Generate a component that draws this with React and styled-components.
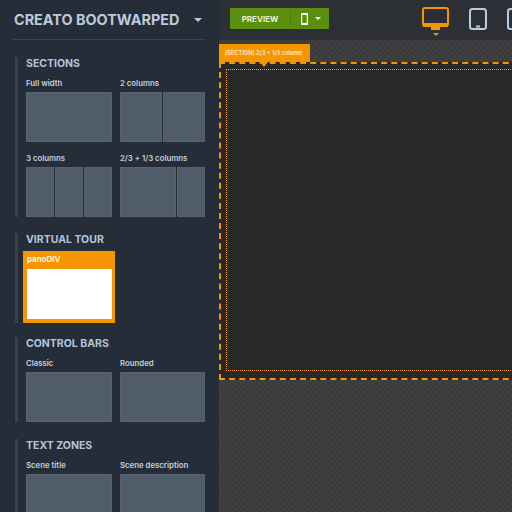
import React from "react";
import styled, { createGlobalStyle } from "styled-components";

const GlobalStyle = createGlobalStyle`
  html, body {
    margin: 0;
    padding: 0;
    height: 100%;
    overflow: hidden;
    background: #2c2f34;
    font-family: "Inter", "Liberation Sans", sans-serif;
  }
`;

const Page = styled.div`
  display: flex;
  width: 512px;
  height: 512px;
  overflow: hidden;
`;

const Sidebar = styled.aside`
  flex: 0 0 219px;
  height: 512px;
  overflow: hidden;
  padding: 0 14px 0 12px;
  box-sizing: border-box;
  background: #252d38;
`;

const Header = styled.header`
  display: flex;
  align-items: center;
  justify-content: space-between;
  height: 40px;
  margin-bottom: 17px;
  padding: 0 2px;
  box-sizing: border-box;
  border-bottom: 1px solid #39424e;
`;

const Brand = styled.h1`
  margin: 0;
  font-size: 14.4px;
  font-weight: 700;
  white-space: nowrap;
  color: #bccbdc;
`;

const Caret = styled.span`
  display: block;
  width: 0;
  height: 0;
  margin-left: ${(p) => p.$left || 0}px;
  margin-right: ${(p) => p.$right || 0}px;
  border-left: ${(p) => p.$size || 4}px solid transparent;
  border-right: ${(p) => p.$size || 4}px solid transparent;
  border-top: ${(p) => p.$size || 4}px solid ${(p) => p.$color || "#bccbdc"};
`;

const Group = styled.section`
  position: relative;
  margin-bottom: ${(p) => p.$gap || 15}px;
  padding-left: 14px;
  &::before {
    content: "";
    position: absolute;
    left: 3px;
    top: 0;
    bottom: 0;
    width: 3px;
    background: #39414c;
  }
`;

const GroupTitle = styled.h2`
  margin: 0;
  height: 14px;
  font-size: 10.5px;
  line-height: 13px;
  font-weight: 700;
  color: #b4c5d8;
  white-space: nowrap;
`;

const ThumbGrid = styled.div`
  display: grid;
  grid-template-columns: 86px 85px;
  column-gap: 8px;
  row-gap: 10px;
  margin-top: 6px;
`;

const Label = styled.div`
  height: 15px;
  font-size: 7.8px;
  line-height: 12px;
  font-weight: 600;
  color: #c2d0df;
  white-space: nowrap;
`;

const Thumb = styled.div`
  display: flex;
  gap: 1.5px;
  height: 50px;
`;

const Col = styled.div`
  flex: ${(p) => p.$grow || 1} 1 0;
  box-sizing: border-box;
  background: #505c69;
  border: 1px solid #57636f;
`;

const PanoCard = styled.div`
  box-sizing: border-box;
  width: 92px;
  height: 72px;
  margin: 4px 0 -3px -3px;
  padding: 0 3px 4px 4px;
  background: #f59600;
  display: flex;
  flex-direction: column;
`;

const PanoLabel = styled.div`
  height: 18px;
  font-size: 8px;
  line-height: 17px;
  font-weight: 600;
  color: #fff;
`;

const PanoBody = styled.div`
  flex: 1;
  background: #fff;
`;

const Main = styled.main`
  flex: 1;
  min-width: 0;
  display: flex;
  flex-direction: column;
  overflow: hidden;
`;

const TopBar = styled.div`
  flex: 0 0 40px;
  display: flex;
  align-items: flex-start;
  justify-content: space-between;
  padding: 8px 0 0 11px;
  box-sizing: border-box;
  background: #2c2f34;
`;

const PreviewButton = styled.div`
  display: flex;
  align-items: center;
  width: 99px;
  height: 21px;
  box-sizing: border-box;
  border-radius: 1px;
  background: #5a8f0e;
  color: #fff;
`;

const PreviewText = styled.span`
  flex: 0 0 60px;
  text-align: center;
  font-size: 8px;
  font-weight: 700;
  color: #e8f2da;
`;

const Divider = styled.span`
  width: 1px;
  height: 13px;
  background: #4d7b0c;
  margin-right: 10px;
`;

const Devices = styled.div`
  display: flex;
  align-items: flex-start;
  gap: 20px;
  margin-right: -13px;
  margin-top: -1px;
`;

const Device = styled.div`
  display: flex;
  flex-direction: column;
  align-items: center;
  gap: 3px;
`;

const Canvas = styled.div`
  flex: 1;
  padding-top: 22px;
  background-color: #3b3b3b;
  background-image:
    linear-gradient(45deg, #404040 25%, transparent 25%, transparent 75%, #404040 75%),
    linear-gradient(45deg, #404040 25%, transparent 25%, transparent 75%, #404040 75%);
  background-size: 6px 6px;
  background-position: 0 0, 3px 3px;
`;

const Frame = styled.div`
  position: relative;
  box-sizing: border-box;
  width: 310px;
  height: 318px;
  padding: 5px 4px 7px 5px;
  border: 2px dashed #f59600;
  background: #282828;
`;

const Inner = styled.div`
  height: 100%;
  box-sizing: border-box;
  border: 1px dotted #f0a020;
  background: #282828;
`;

const Tag = styled.div`
  position: absolute;
  left: -2px;
  top: -20px;
  width: 91px;
  height: 18px;
  padding-left: 6px;
  box-sizing: border-box;
  background: #f59600;
  color: #fff1d8;
  font-size: 5.7px;
  font-weight: 600;
  line-height: 18px;
  white-space: nowrap;
  &::after {
    content: "";
    position: absolute;
    left: 41px;
    bottom: -5px;
    border-left: 4px solid transparent;
    border-right: 4px solid transparent;
    border-top: 5px solid #f59600;
  }
`;

const PhoneIcon = () => (
  <svg width="7" height="12" viewBox="0 0 7 12" fill="none">
    <rect x="0.6" y="0.6" width="5.8" height="10.8" rx="1" stroke="#fff" strokeWidth="1.2" />
    <rect x="0" y="0" width="7" height="2" rx="1" fill="#fff" />
    <rect x="0" y="10" width="7" height="2" rx="1" fill="#fff" />
  </svg>
);

const DesktopIcon = () => (
  <svg width="27" height="23" viewBox="0 0 27 23">
    <rect x="1" y="1" width="25" height="18" rx="2" fill="#2c2f34" stroke="#f59600" strokeWidth="2" />
    <rect x="1" y="16" width="25" height="4" rx="1" fill="#f59600" />
    <rect x="9" y="20" width="9" height="3" fill="#f59600" />
  </svg>
);

const TabletIcon = () => (
  <svg width="18" height="23" viewBox="0 0 18 23">
    <rect x="1" y="2" width="16" height="20" rx="2.5" fill="#2c2f34" stroke="#b7cde6" strokeWidth="2" />
    <rect x="7" y="18.5" width="4" height="2" fill="#b7cde6" />
  </svg>
);

function Section({ title, gap, children }) {
  return (
    <Group $gap={gap}>
      <GroupTitle>{title}</GroupTitle>
      {children}
    </Group>
  );
}

function Layout({ label, cols = [1] }) {
  return (
    <div>
      <Label>{label}</Label>
      <Thumb>
        {cols.map((grow, i) => (
          <Col key={i} $grow={grow} />
        ))}
      </Thumb>
    </div>
  );
}

export default function App() {
  return (
    <Page>
      <GlobalStyle />
      <Sidebar>
        <Header>
          <Brand>CREATO BOOTWARPED</Brand>
          <Caret $size={4} $right={1} />
        </Header>
        <Section title="SECTIONS" gap={16}>
          <ThumbGrid>
            <Layout label="Full width" />
            <Layout label="2 columns" cols={[1, 1]} />
            <Layout label="3 columns" cols={[1, 1, 1]} />
            <Layout label="2/3 + 1/3 columns" cols={[57, 27]} />
          </ThumbGrid>
        </Section>
        <Section title="VIRTUAL TOUR" gap={17}>
          <PanoCard>
            <PanoLabel>panoDIV</PanoLabel>
            <PanoBody />
          </PanoCard>
        </Section>
        <Section title="CONTROL BARS" gap={17}>
          <ThumbGrid>
            <Layout label="Classic" />
            <Layout label="Rounded" />
          </ThumbGrid>
        </Section>
        <Section title="TEXT ZONES">
          <ThumbGrid>
            <Layout label="Scene title" />
            <Layout label="Scene description" />
          </ThumbGrid>
        </Section>
      </Sidebar>
      <Main>
        <TopBar>
          <PreviewButton>
            <PreviewText>PREVIEW</PreviewText>
            <Divider />
            <PhoneIcon />
            <Caret $size={3.5} $color="#fff" $left={7} />
          </PreviewButton>
          <Devices>
            <Device>
              <DesktopIcon />
              <Caret $size={3} $color="#f59600" />
            </Device>
            <Device>
              <TabletIcon />
            </Device>
            <Device>
              <TabletIcon />
            </Device>
          </Devices>
        </TopBar>
        <Canvas>
          <Frame>
            <Tag>[SECTION] 2/3 + 1/3 column</Tag>
            <Inner />
          </Frame>
        </Canvas>
      </Main>
    </Page>
  );
}
